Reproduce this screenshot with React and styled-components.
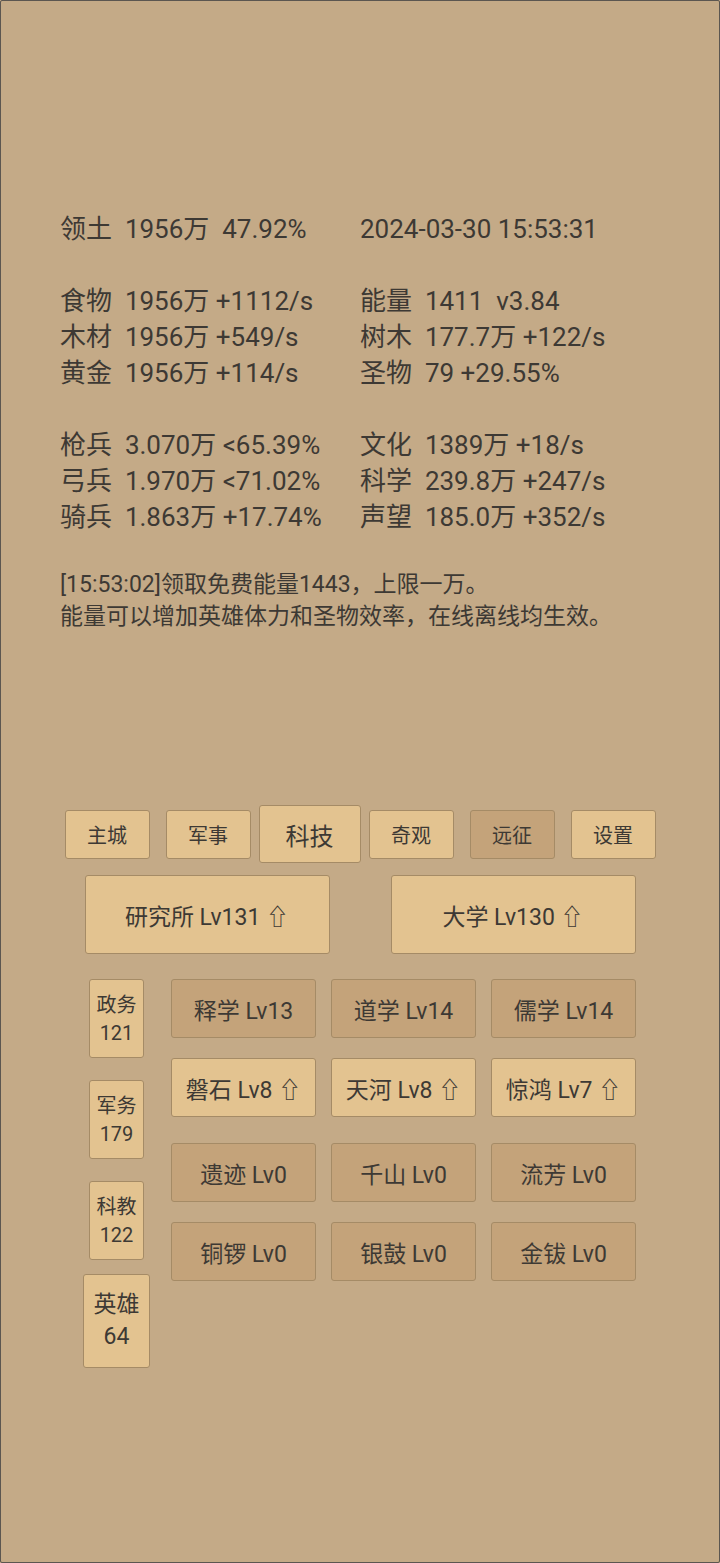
import React from "react";
import styled, { createGlobalStyle } from "styled-components";

const GlobalStyle = createGlobalStyle`
  html, body {
    margin: 0;
    padding: 0;
    background: #c4aa87;
  }
  body {
    font-family: Roboto, "Noto Sans CJK SC", sans-serif;
    color: #3d3934;
  }
`;

const Page = styled.div`
  box-sizing: border-box;
  width: 720px;
  height: 1563px;
  border: 1px solid #5b5650;
  border-radius: 2px;
  background: #c4aa87;
  overflow: hidden;
`;

const Stats = styled.div`
  padding: 210px 0 0 59px;
  font-size: 26px;
  line-height: 36px;
`;

const StatRow = styled.div`
  display: grid;
  grid-template-columns: 300px 300px;
  height: 36px;
  white-space: pre;
`;

const Spacer = styled.div`
  height: ${(p) => p.h}px;
`;

const Log = styled.div`
  font-size: 23px;
  line-height: 32px;
  white-space: pre;
`;

const Tabs = styled.div`
  margin-top: 172px;
  display: flex;
  justify-content: center;
  align-items: center;
`;

const Btn = styled.div`
  box-sizing: border-box;
  display: flex;
  flex-direction: column;
  align-items: center;
  justify-content: center;
  border: 1px solid #a58b66;
  border-radius: 3px;
  background: ${(p) => (p.dark ? "#c4a37a" : "#e3c390")};
  white-space: nowrap;
`;

const Tab = styled(Btn)`
  width: ${(p) => (p.active ? 102 : 85)}px;
  height: ${(p) => (p.active ? 58 : 49)}px;
  margin: 0 ${(p) => (p.active ? 0 : 8)}px;
  font-size: ${(p) => (p.active ? 24 : 20)}px;
`;

const Buildings = styled.div`
  margin-top: 12px;
  display: flex;
  justify-content: center;
  gap: 61px;
`;

const Building = styled(Btn)`
  width: 245px;
  height: 79px;
  font-size: 23px;
`;

const Lower = styled.div`
  margin-top: 25px;
  display: flex;
  gap: 21px;
  padding-left: 82px;
`;

const SideCol = styled.div`
  width: 67px;
  display: flex;
  flex-direction: column;
  align-items: center;
  gap: 22px;
`;

const SideBox = styled(Btn)`
  width: ${(p) => (p.big ? 67 : 55)}px;
  height: ${(p) => (p.big ? 94 : 79)}px;
  margin-top: ${(p) => (p.big ? -8 : 0)}px;
  font-size: ${(p) => (p.big ? 23 : 20)}px;
  line-height: ${(p) => (p.big ? 32 : 28)}px;
`;

const Groups = styled.div`
  display: flex;
  flex-direction: column;
  gap: 26px;
`;

const Group = styled.div`
  display: grid;
  grid-template-columns: repeat(3, 145px);
  column-gap: 15px;
  row-gap: 20px;
`;

const Skill = styled(Btn)`
  height: 59px;
  font-size: 23px;
`;

const stats = [
  ["领土  1956万  47.92%", "2024-03-30 15:53:31"],
  null,
  ["食物  1956万 +1112/s", "能量  1411  v3.84"],
  ["木材  1956万 +549/s", "树木  177.7万 +122/s"],
  ["黄金  1956万 +114/s", "圣物  79 +29.55%"],
  null,
  ["枪兵  3.070万 <65.39%", "文化  1389万 +18/s"],
  ["弓兵  1.970万 <71.02%", "科学  239.8万 +247/s"],
  ["骑兵  1.863万 +17.74%", "声望  185.0万 +352/s"],
];

const tabs = [
  { name: "主城" },
  { name: "军事" },
  { name: "科技", active: true },
  { name: "奇观" },
  { name: "远征", dark: true },
  { name: "设置" },
];

const groups = [
  [
    { name: "释学 Lv13", dark: true },
    { name: "道学 Lv14", dark: true },
    { name: "儒学 Lv14", dark: true },
    { name: "磐石 Lv8 ⇧" },
    { name: "天河 Lv8 ⇧" },
    { name: "惊鸿 Lv7 ⇧" },
  ],
  [
    { name: "遗迹 Lv0", dark: true },
    { name: "千山 Lv0", dark: true },
    { name: "流芳 Lv0", dark: true },
    { name: "铜锣 Lv0", dark: true },
    { name: "银鼓 Lv0", dark: true },
    { name: "金钹 Lv0", dark: true },
  ],
];

const side = [
  { name: "政务", n: 121 },
  { name: "军务", n: 179 },
  { name: "科教", n: 122 },
  { name: "英雄", n: 64, big: true },
];

export default function App() {
  return (
    <>
      <GlobalStyle />
      <Page>
        <Stats>
          {stats.map((row, i) =>
            row ? (
              <StatRow key={i}>
                <span>{row[0]}</span>
                <span>{row[1]}</span>
              </StatRow>
            ) : (
              <Spacer key={i} h={36} />
            )
          )}
          <Spacer h={34} />
          <Log>
            <div>[15:53:02]领取免费能量1443，上限一万。</div>
            <div>能量可以增加英雄体力和圣物效率，在线离线均生效。</div>
          </Log>
        </Stats>

        <Tabs>
          {tabs.map((t) => (
            <Tab key={t.name} active={t.active} dark={t.dark}>
              {t.name}
            </Tab>
          ))}
        </Tabs>

        <Buildings>
          <Building>研究所 Lv131 ⇧</Building>
          <Building>大学 Lv130 ⇧</Building>
        </Buildings>

        <Lower>
          <SideCol>
            {side.map((s) => (
              <SideBox key={s.name} big={s.big}>
                <span>{s.name}</span>
                <span>{s.n}</span>
              </SideBox>
            ))}
          </SideCol>
          <Groups>
            {groups.map((g, gi) => (
              <Group key={gi}>
                {g.map((s) => (
                  <Skill key={s.name} dark={s.dark}>
                    {s.name}
                  </Skill>
                ))}
              </Group>
            ))}
          </Groups>
        </Lower>
      </Page>
    </>
  );
}
